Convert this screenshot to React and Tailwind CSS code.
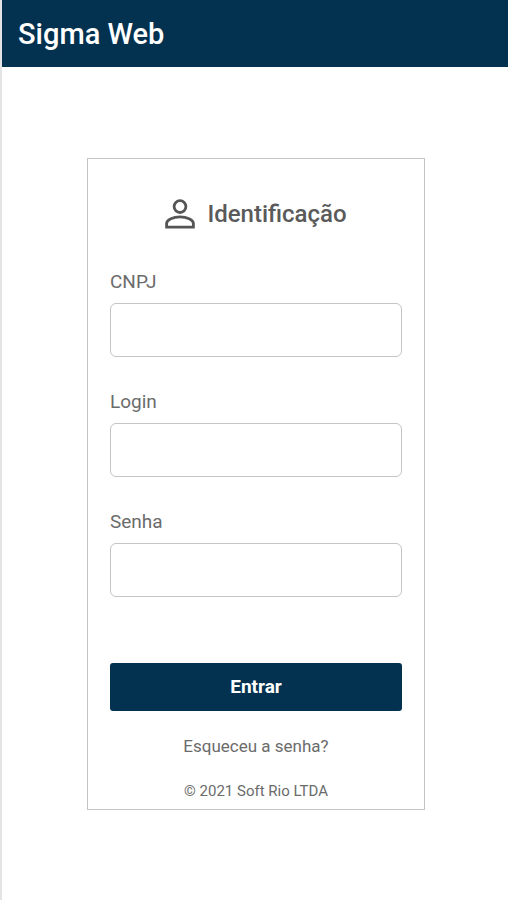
const fields = [
  { id: "cnpj", label: "CNPJ", type: "text" },
  { id: "login", label: "Login", type: "text" },
  { id: "senha", label: "Senha", type: "password" },
];

function PersonIcon() {
  return (
    <svg
      width="30"
      height="30"
      viewBox="0 0 30 30"
      fill="none"
      stroke="#555"
      strokeWidth="2.8"
      aria-hidden="true"
    >
      <circle cx="15" cy="7.6" r="5.9" />
      <path d="M1.6 28.2V24.6C1.6 20.4 8.4 17.9 15 17.9S28.4 20.4 28.4 24.6V28.2Z" />
    </svg>
  );
}

export default function App() {
  return (
    <div className="min-h-screen border-l-2 border-[#e4e4e6] bg-white font-['Roboto',sans-serif] text-[#6b6b6b]">
      <header className="flex h-[67px] items-center bg-[#033150] px-4">
        <h1 className="text-[29px] leading-8 font-medium text-white">Sigma Web</h1>
      </header>
      <main className="flex justify-center pt-[91px] pr-4 pb-8 pl-[18px]">
        <form
          className="w-full max-w-[338px] border border-[#c4c4c4] px-[22px] pt-[39px] pb-2"
          onSubmit={(e) => e.preventDefault()}
        >
          <h2 className="flex items-center justify-center gap-3 text-2xl leading-8 font-medium text-[#5a5a5a]">
            <PersonIcon />
            Identificação
          </h2>
          <div className="mt-10 flex flex-col gap-[33px]">
            {fields.map((f) => (
              <div key={f.id} className="flex flex-col gap-[9px]">
                <label htmlFor={f.id} className="text-[19px] leading-6">{f.label}</label>
                <input
                  id={f.id}
                  type={f.type}
                  className="h-[54px] w-full rounded-md border border-[#c4c4c4] px-3 text-lg outline-none"
                />
              </div>
            ))}
          </div>
          <button type="submit" className="mt-[66px] h-12 w-full rounded-[3px] bg-[#033150] text-[19px] leading-6 font-bold text-white">
            Entrar
          </button>
          <a href="#senha" className="mt-[23px] block text-center text-[17px] leading-6">Esqueceu a senha?</a>
          <p className="mt-[23px] text-center text-[15px] leading-5">© 2021 Soft Rio LTDA</p>
        </form>
      </main>
    </div>
  );
}
